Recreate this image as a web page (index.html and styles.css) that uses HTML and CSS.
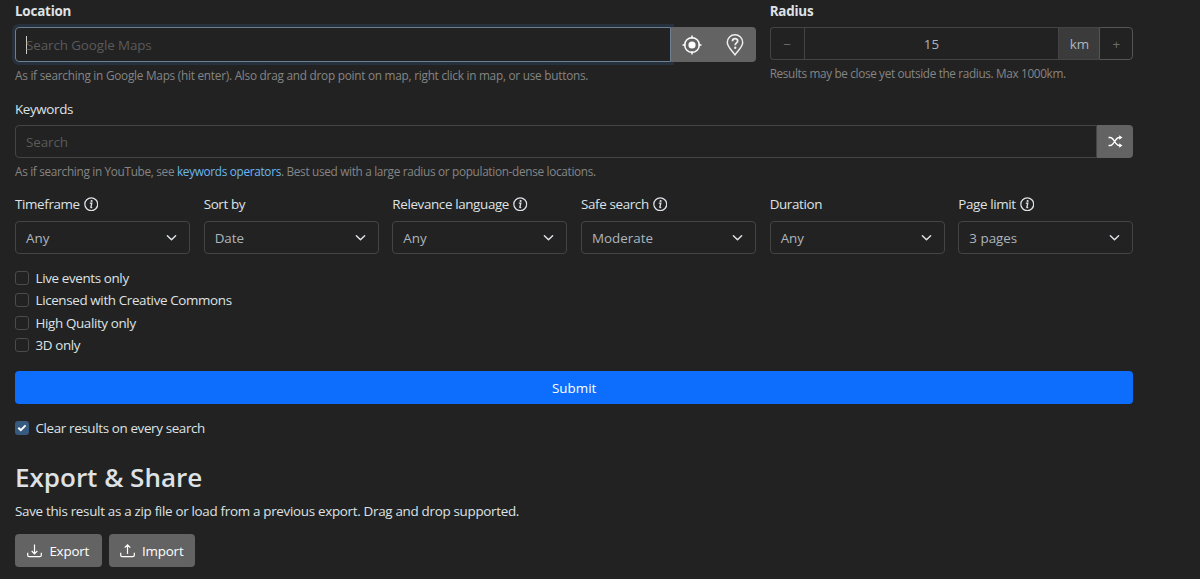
FILE: index.html
```
<!DOCTYPE html>
<html lang="en">
<head>
  <meta charset="UTF-8">
  <meta name="viewport" content="width=device-width, initial-scale=1">
  <title>Geo Search</title>
  <link rel="stylesheet" href="styles.css">
</head>
<body>
  <div class="container">
    <form id="search-form">
      <div class="row top-row">
        <div class="location">
          <label class="required" for="location">Location</label>
          <div class="input-group focused">
            <div class="control" id="location"><span class="caret"></span><span class="placeholder">Search Google Maps</span></div>
            <button type="button" class="btn btn-locate" aria-label="My location">
              <svg width="20" height="20" viewBox="0 0 20 20" fill="none" stroke="#fff" stroke-width="1.5">
                <circle cx="10" cy="10" r="7.3"/>
                <circle cx="10" cy="10" r="3.6" fill="#fff" stroke="none"/>
                <path d="M10 .5v3M10 16.5v3M.5 10h3M16.5 10h3"/>
              </svg>
            </button>
            <button type="button" class="btn btn-random" aria-label="Random location">
              <svg width="18" height="22" viewBox="0 0 18 22" fill="none" stroke="#eee" stroke-width="1.5">
                <path d="M9 20.8C6.5 17 1.3 13 1.3 8.5a7.700 7.700 0 0 1 15.400 0C16.700 13 11.500 17 9 20.800z"/>
                <path d="M6.500 7.200c0-3.400 5.200-3.200 5.200-.3 0 2-2.500 2-2.500 4.300" stroke-width="1.800"/>
                <circle cx="9.200" cy="13.800" r="1.200" fill="#eee" stroke="none"/>
              </svg>
            </button>
          </div>
          <p class="help help-location">As if searching in Google Maps (hit enter). Also drag and drop point on map, right click in map, or use buttons.</p>
        </div>
        <div class="radius">
          <label class="required" for="radius">Radius</label>
          <div class="input-group">
            <button type="button" class="step minus">−</button>
            <div class="control amount" id="radius">15</div>
            <span class="unit">km</span>
            <button type="button" class="step plus">+</button>
          </div>
          <p class="help help-radius">Results may be close yet outside the radius. Max 1000km.</p>
        </div>
      </div>

      <div class="keywords">
        <label for="keywords">Keywords</label>
        <div class="input-group">
          <div class="control" id="keywords"><span class="placeholder">Search</span></div>
          <button type="button" class="btn btn-shuffle" aria-label="Random topic">
            <svg width="15" height="13" viewBox="0 0 16 14" fill="none" stroke="#fff" stroke-width="1.4">
              <path d="M.5 2.7h1.800C6.500 2.700 7.500 11.300 12 11.300h1M.5 11.300h1.800C6.500 11.300 7.500 2.700 12 2.700h1"/>
              <path d="M12 .3l3.500 2.400L12 5.100zM12 8.900l3.500 2.400L12 13.700z" fill="#fff" stroke="none"/>
            </svg>
          </button>
        </div>
        <p class="help help-keywords">As if searching in YouTube, see <a href="#">keywords operators</a>. Best used with a large radius or population-dense locations.</p>
      </div>

      <div class="row filters">
        <div>
          <label>Timeframe <svg class="info" viewBox="0 0 16 16"><use href="#info"/></svg></label>
          <div class="control select">Any<svg class="chevron" viewBox="0 0 12 8"><use href="#chevron"/></svg></div>
        </div>
        <div>
          <label>Sort by</label>
          <div class="control select">Date<svg class="chevron" viewBox="0 0 12 8"><use href="#chevron"/></svg></div>
        </div>
        <div>
          <label>Relevance language <svg class="info" viewBox="0 0 16 16"><use href="#info"/></svg></label>
          <div class="control select">Any<svg class="chevron" viewBox="0 0 12 8"><use href="#chevron"/></svg></div>
        </div>
        <div>
          <label>Safe search <svg class="info" viewBox="0 0 16 16"><use href="#info"/></svg></label>
          <div class="control select">Moderate<svg class="chevron" viewBox="0 0 12 8"><use href="#chevron"/></svg></div>
        </div>
        <div>
          <label>Duration</label>
          <div class="control select">Any<svg class="chevron" viewBox="0 0 12 8"><use href="#chevron"/></svg></div>
        </div>
        <div>
          <label>Page limit <svg class="info" viewBox="0 0 16 16"><use href="#info"/></svg></label>
          <div class="control select">3 pages<svg class="chevron" viewBox="0 0 12 8"><use href="#chevron"/></svg></div>
        </div>
      </div>

      <div class="checks">
        <label class="check"><input type="checkbox"> Live events only</label>
        <label class="check"><input type="checkbox"> Licensed with Creative Commons</label>
        <label class="check"><input type="checkbox"> High Quality only</label>
        <label class="check"><input type="checkbox"> 3D only</label>
      </div>

      <button type="button" class="submit">Submit</button>
      <label class="check clear"><span class="checked"><svg width="10" height="8" viewBox="0 0 10 8" fill="none" stroke="#fff" stroke-width="2"><path d="M1.3 3.7l2.500 2.500L8.600 1.400"/></svg></span> Clear results on every search</label>
    </form>

    <h2>Export &amp; Share</h2>
    <p class="share-text">Save this result as a zip file or load from a previous export. Drag and drop supported.</p>
    <div class="share-buttons">
      <button type="button" class="btn">
        <svg width="15" height="14" viewBox="0 0 15 14" fill="none" stroke="#fff" stroke-width="1.2">
          <path d="M.7 8.700v2.600q0 1.400 1.400 1.400h10.800q1.400 0 1.400-1.400V8.700M7.500 .5v9M4.700 7l2.800 2.800L10.300 7"/>
        </svg>Export</button>
      <button type="button" class="btn">
        <svg width="15" height="14" viewBox="0 0 15 14" fill="none" stroke="#fff" stroke-width="1.2">
          <path d="M.7 8.700v2.600q0 1.400 1.400 1.400h10.800q1.400 0 1.400-1.400V8.700M7.500 10V1M4.700 3.700L7.500 .9l2.800 2.800"/>
        </svg>Import</button>
    </div>
  </div>

  <svg width="0" height="0" class="symbols">
    <symbol id="info" viewBox="0 0 16 16">
      <circle cx="8" cy="8" r="7.1" fill="none" stroke="#dee2e6" stroke-width="1.4"/>
      <path d="M6.400 6.700h2.200l-1 4.500q0 .8 1.400 .2" fill="none" stroke="#dee2e6" stroke-width="1.500"/>
      <circle cx="8.400" cy="4.400" r="1.200" fill="#dee2e6"/>
    </symbol>
    <symbol id="chevron" viewBox="0 0 12 8">
      <path d="M1.500 1.500L6 6l4.500-4.500" fill="none" stroke="#dee2e6" stroke-width="1.600" stroke-linecap="round" stroke-linejoin="round"/>
    </symbol>
  </svg>
</body>
</html>
```
FILE: styles.css
```
* {
  box-sizing: border-box;
}
body {
  margin: 0;
  background-color: #222;
  color: #dee2e6;
  font-family: "Open Sans", "Noto Sans", sans-serif;
  font-size: 13.4px;
  line-height: 22px;
}
.container {
  width: 1133.4px;
  padding-left: 15px;
}
label {
  display: block;
  margin-bottom: 5px;
  letter-spacing: -0.36px;
}
button {
  font: inherit;
  color: #fff;
  border: none;
}
.required {
  font-weight: bold;
  letter-spacing: -0.2px;
}
.row {
  display: grid;
  grid-template-columns: repeat(6, 1fr);
  column-gap: 13.6px;
}
.location {
  grid-column: span 4;
}
.radius {
  grid-column: span 2;
}
.top-row {
  height: 98px;
}
.input-group {
  display: flex;
  height: 33px;
}
.focused {
  height: 35px;
}
.control {
  display: flex;
  align-items: center;
  flex: 1;
  padding: 0 10px;
  border: 1px solid #444;
  border-radius: 4px;
  color: #adb5bd;
}
.input-group .control {
  border-radius: 4px 0 0 4px;
}
.focused .control {
  border-color: #6c7f93;
  box-shadow: 0 0 0 3px #26313d;
}
.caret {
  width: 1px;
  height: 18px;
  margin-right: -1px;
  background-color: #ccc;
}
.placeholder {
  padding-top: 1px;
  color: #5a5a5a;
  letter-spacing: -0.1px;
}
.btn {
  display: flex;
  align-items: center;
  justify-content: center;
  padding: 0;
  background-color: #636363;
}
.btn-locate {
  width: 42px;
}
.btn-random {
  width: 43px;
  border-radius: 0 4px 4px 0;
}
.btn-shuffle {
  width: 36.5px;
  border-radius: 0 4px 4px 0;
}
.help {
  margin: 3px 0 0;
  color: #858585;
  font-size: 11.8px;
  line-height: 20px;
}
.help-location {
  letter-spacing: -0.25px;
}
.help-radius {
  letter-spacing: -0.36px;
}
.help-keywords {
  letter-spacing: -0.32px;
}
.help a {
  color: #6ab7f0;
  text-decoration: none;
}
.step {
  width: 34px;
  padding: 0;
  background: none;
  border: 1px solid #444;
  color: #6c6c6c;
}
.minus {
  border-right: none;
  border-radius: 4px 0 0 4px;
}
.plus {
  border-radius: 0 4px 4px 0;
  border-color: #555;
}
.input-group .amount {
  justify-content: center;
  border-radius: 0;
}
.unit {
  width: 40px;
  padding-top: 1px;
  background-color: #3b3b3b;
  border: 1px solid #444;
  border-width: 1px 0;
  color: #adb5bd;
  line-height: 31px;
  text-align: center;
}
.filters {
  margin-top: 12px;
}
.filters label {
  display: flex;
  align-items: center;
  gap: 4px;
  margin-bottom: 6px;
}
.info {
  width: 14.5px;
  height: 14.5px;
}
.select {
  justify-content: space-between;
  height: 33px;
  padding-right: 12px;
}
.chevron {
  width: 11px;
  height: 8px;
}
.checks {
  margin-top: 13px;
}
.check {
  display: flex;
  align-items: center;
  gap: 6.5px;
  height: 22.3px;
  margin: 0;
}
.check input {
  appearance: none;
  width: 14px;
  height: 14px;
  margin: 0;
  border: 1px solid #4b4b4b;
  border-radius: 3px;
}
.submit {
  display: block;
  width: 100%;
  height: 33px;
  margin: 15px 0 13px;
  border-radius: 4px;
  background-color: #0d6efd;
}
.checked {
  display: flex;
  align-items: center;
  justify-content: center;
  width: 14px;
  height: 14px;
  border-radius: 3px;
  background-color: #375a7f;
}
h2 {
  margin: 21px 0 6px;
  font-size: 26px;
  font-weight: 600;
  line-height: 34px;
}
.share-text {
  margin: 0 0 12px;
  letter-spacing: -0.3px;
}
.share-buttons {
  display: flex;
  gap: 7px;
}
.share-buttons .btn {
  width: 86.5px;
  height: 33px;
  gap: 7px;
  border-radius: 4px;
  letter-spacing: -0.2px;
}
.symbols {
  display: block;
}
```
